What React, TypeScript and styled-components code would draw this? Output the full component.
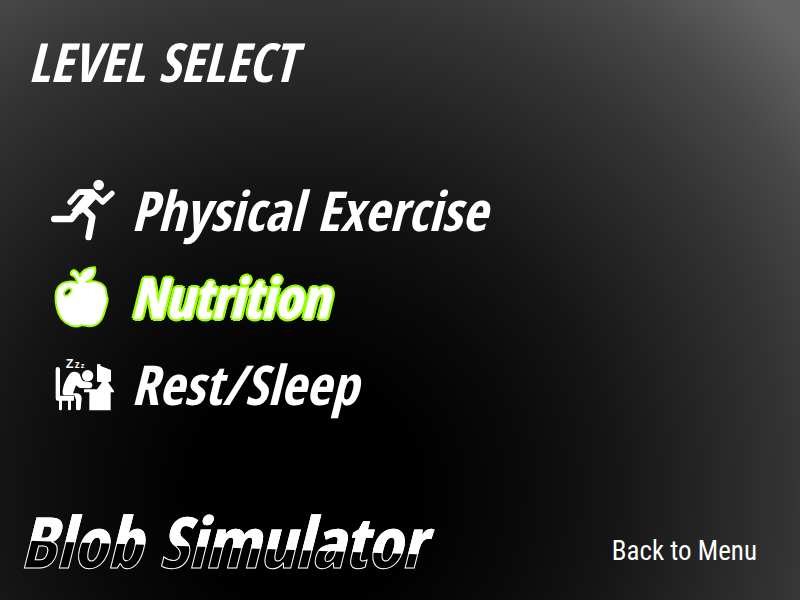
import React from "react";
import styled, { createGlobalStyle, css } from "styled-components";

const condensed = '"Open Sans Condensed", "Roboto Condensed", "Open Sans", sans-serif';

const GlobalStyle = createGlobalStyle`
  *, *::before, *::after { box-sizing: border-box; }
  body { margin: 0; background: #000; }
`;

const Screen = styled.main`
  display: flex;
  flex-direction: column;
  min-height: 100vh;
  padding: 24px 43px 15px 20px;
  color: #fff;
  font-family: ${condensed};
  background: radial-gradient(
    circle at 38% 82%,
    #000 0,
    #000 110px,
    #0a0a0a 220px,
    #151515 310px,
    #343434 490px,
    #484848 580px,
    #646464 670px
  );
`;

const Title = styled.h1`
  margin: 0;
  padding-left: 8px;
  font-size: 54px;
  font-style: italic;
  font-weight: 700;
  line-height: 74px;
`;

const LevelList = styled.ul`
  display: flex;
  flex-direction: column;
  gap: 7px;
  margin: 0;
  padding: 72px 0 0 28px;
  list-style: none;
`;

const LevelButton = styled.button<{ $active?: boolean }>`
  display: flex;
  align-items: center;
  gap: 13px;
  height: 80px;
  padding: 0;
  border: 0;
  background: none;
  color: #fff;
  font-family: inherit;
  font-size: 55px;
  font-style: italic;
  font-weight: 700;
  line-height: 80px;
  white-space: nowrap;
  cursor: pointer;

  ${(p) =>
    p.$active &&
    css`
      -webkit-text-stroke: 1px #fff;
      text-shadow:
        3px 0 #9f0, -3px 0 #9f0, 0 3px #9f0, 0 -3px #9f0,
        2px 2px #9f0, -2px 2px #9f0, 2px -2px #9f0, -2px -2px #9f0;
    `}
`;

const Icon = styled.svg`
  flex: none;
  width: 70px;
  height: 80px;
  font-style: normal;
`;

const Footer = styled.footer`
  display: flex;
  align-items: flex-end;
  justify-content: space-between;
  margin-top: auto;
`;

const Brand = styled.p`
  margin: 0;
  padding-right: 8px;
  font-size: 70px;
  font-style: italic;
  font-weight: 700;
  line-height: 88px;
  white-space: nowrap;
  color: transparent;
  background: linear-gradient(182deg, #fff 56%, #000 57%);
  background-clip: text;
  -webkit-background-clip: text;
  -webkit-text-stroke: 1px #fff;
`;

const BackButton = styled.button`
  margin-bottom: 16px;
  padding: 0;
  border: 0;
  background: none;
  color: #fff;
  font-family: "Roboto Condensed", ${condensed};
  font-size: 27px;
  font-weight: 400;
  line-height: 36px;
  white-space: nowrap;
  cursor: pointer;
`;

function RunnerIcon() {
  return (
    <Icon viewBox="24 0 210 240" aria-hidden="true">
      <circle cx="176" cy="45" r="16" fill="#fff" />
      <path d="M118 58H160L174 80L143 114L122 132L94 122L134 75H118Z" fill="#fff" />
      <g fill="none" stroke="#fff" strokeLinecap="round" strokeLinejoin="round">
        <path d="M90 97L117 66H156" strokeWidth="16" />
        <path d="M160 70L188 96L216 70" strokeWidth="16" />
        <path d="M112 124L94 147H43" strokeWidth="20" />
        <path d="M130 114L157 141L146 201" strokeWidth="20" />
      </g>
    </Icon>
  );
}

function AppleIcon() {
  return (
    <Icon viewBox="24 6 210 240" aria-hidden="true">
      <g stroke="#9f0" strokeWidth="6" strokeLinejoin="round">
        <path
          fill="#fff"
          d="M113 84C109 72 105 63 96 61C90 58 92 46 101 45C110 45 116 56 120 64C124 48 142 36 165 37C170 55 158 75 139 81C164 74 192 84 197 102C199 111 199 121 203 130C204 145 198 154 194 170C187 196 171 213 149 214C138 215 131 208 123 211C113 217 103 215 91 211C70 203 55 183 50 158C46 139 43 113 54 97C67 79 93 76 113 84Z"
        />
        <ellipse cx="83" cy="111" rx="13" ry="7" fill="#111" transform="rotate(-45 83 111)" />
      </g>
    </Icon>
  );
}

function SleeperIcon() {
  return (
    <Icon viewBox="24 -3 210 240" aria-hidden="true">
      <g fill="#fff">
        <path d="M47 72Q47 66 53 66T60 72V152H102V167H93V192Q93 196 88 196T84 192V167H66V192Q66 196 61 196T57 192V167H52Q47 167 47 160Z" />
        <path d="M68 148C66 128 78 99 91 85C99 77 115 80 119 88C123 95 123 103 129 108L148 111C160 111 160 129 148 130L119 129L108 121L99 145H108C119 145 125 151 125 160L122 192Q121 196 115 196T108 192V165L103 151H73Z" />
        <circle cx="143" cy="92" r="17" />
        <path d="M171 58L181 57L182 63L213 75V109L204 112L222 138V142H212V196H148V142H132V133H171L186 112L171 110Z" />
      </g>
      <g fill="#fff" fontFamily="Liberation Sans, sans-serif" fontWeight="700">
        <text x="77" y="70" fontSize="38">Z</text>
        <text x="104" y="70" fontSize="30">z</text>
        <text x="122" y="70" fontSize="22">z</text>
      </g>
    </Icon>
  );
}

const levels = [
  { name: "Physical Exercise", icon: RunnerIcon },
  { name: "Nutrition", icon: AppleIcon, active: true },
  { name: "Rest/Sleep", icon: SleeperIcon },
];

export default function App() {
  return (
    <Screen>
      <GlobalStyle />
      <Title>LEVEL SELECT</Title>
      <LevelList>
        {levels.map(({ name, icon: LevelIcon, active }) => (
          <li key={name}>
            <LevelButton type="button" $active={active}>
              <LevelIcon />
              {name}
            </LevelButton>
          </li>
        ))}
      </LevelList>
      <Footer>
        <Brand>Blob Simulator</Brand>
        <BackButton type="button">Back to Menu</BackButton>
      </Footer>
    </Screen>
  );
}
